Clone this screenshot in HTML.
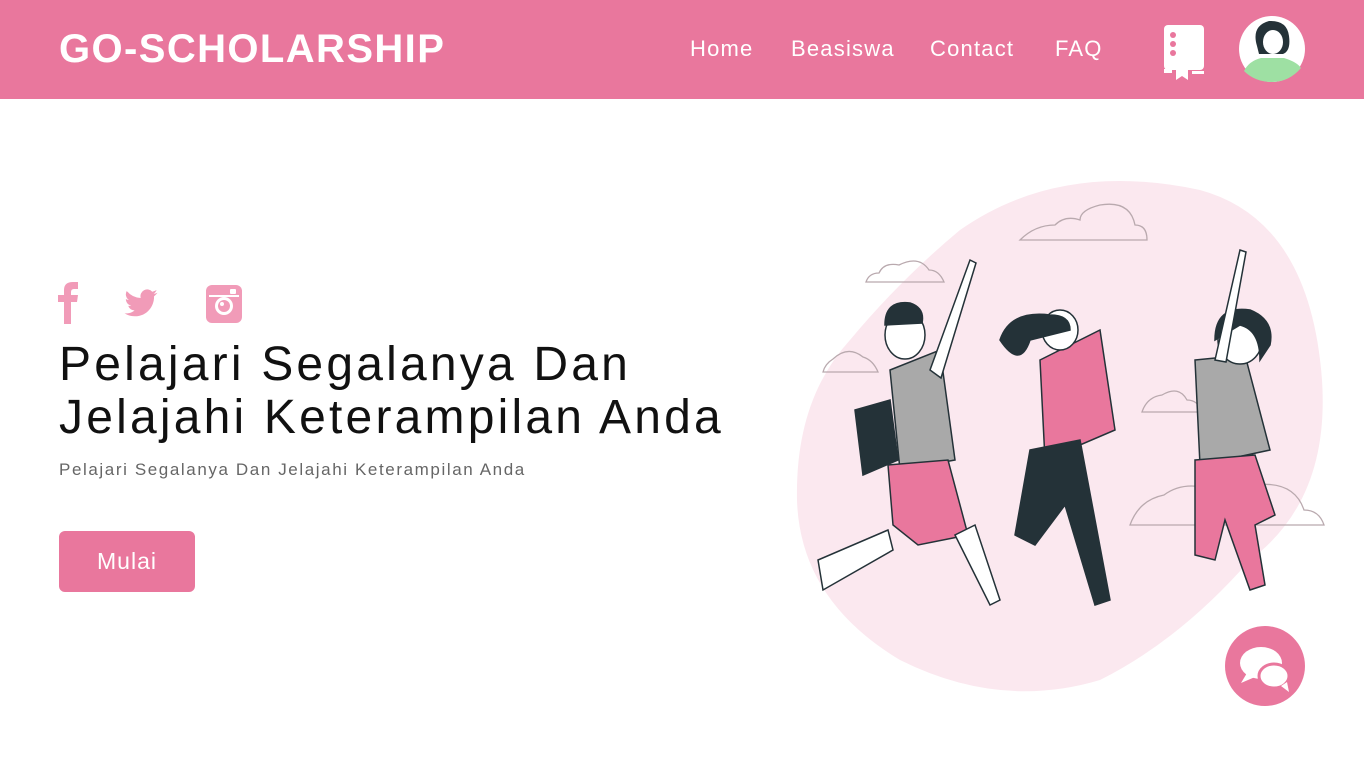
<!DOCTYPE html>
<html><head><meta charset="utf-8"><style>
*{margin:0;padding:0;box-sizing:border-box}
body{width:1364px;height:762px;background:#fff;font-family:"Liberation Sans",sans-serif;position:relative;overflow:hidden}
header{position:absolute;left:0;top:0;width:1364px;height:99px;background:#e9779d}
.logo{position:absolute;left:59px;top:27px;color:#fff;font-weight:bold;font-size:40px;letter-spacing:1.4px}
nav a{position:absolute;top:36px;color:#fff;font-size:22px;text-decoration:none;letter-spacing:1.2px}
h1{position:absolute;left:59px;top:338px;font-weight:normal;font-size:48px;line-height:53px;color:#111;letter-spacing:3.2px}
.sub{position:absolute;left:59px;top:460px;font-size:17px;color:#666;letter-spacing:1.6px}
.btn{position:absolute;left:59px;top:531px;width:136px;height:61px;background:#e9779d;border-radius:6px;color:#fff;font-size:23px;text-align:center;line-height:61px;letter-spacing:1px}
.chat{position:absolute;left:1225px;top:626px;width:80px;height:80px;border-radius:50%;background:#e9779d}
</style></head><body>
<header>
<div class="logo">GO-SCHOLARSHIP</div>
<nav><a style="left:690px">Home</a><a style="left:791px">Beasiswa</a><a style="left:930px">Contact</a><a style="left:1055px">FAQ</a></nav>
<svg style="position:absolute;left:1164px;top:25px" width="42" height="55" viewBox="0 0 42 55">
<rect x="0" y="0" width="40" height="45" rx="4" fill="#fff"/><circle cx="9" cy="10" r="3" fill="#e9779d"/><circle cx="9" cy="19" r="3" fill="#e9779d"/><circle cx="9" cy="28" r="3" fill="#e9779d"/>
<rect x="0" y="44" width="8" height="4" fill="#fff"/><rect x="28" y="46" width="12" height="3" fill="#fff"/>
<path d="M12 44h12v11l-6-4-6 4z" fill="#fff"/></svg>
<svg style="position:absolute;left:1239px;top:16px" width="66" height="66" viewBox="0 0 66 66">
<circle cx="33" cy="33" r="33" fill="#fff"/>
<path d="M5 55 Q10 45 22 42 L45 42 Q58 46 62 52 Q50 66 33 66 Q16 66 5 55z" fill="#9ee0a3"/>
<path d="M18 30 Q12 10 30 5 Q48 4 50 20 Q52 35 44 38 L20 38z" fill="#243238"/>
<ellipse cx="34" cy="26" rx="10" ry="12" fill="#fff"/>
</svg>
</header>
<svg style="position:absolute;left:58px;top:282px" width="20" height="42" viewBox="0 0 20 42"><path d="M6 42V20H0v-7h6V8q0-8 9-8h5v7h-4q-3 0-3 3v3h7l-1 7h-6v22z" fill="#f19bb8"/></svg>
<svg style="position:absolute;left:122px;top:286px" width="38" height="36" viewBox="0 0 24 24"><path d="M23 4.5c-.8.4-1.7.6-2.6.7.9-.6 1.6-1.4 2-2.5-.9.5-1.9.9-2.9 1.1A4.5 4.5 0 0 0 11.8 8 12.8 12.8 0 0 1 2.5 3.3a4.5 4.5 0 0 0 1.4 6c-.7 0-1.4-.2-2-.6 0 2.2 1.5 4 3.6 4.4-.7.2-1.4.2-2 .1.6 1.800 2.2 3.1 4.2 3.1A9 9 0 0 1 1 18.2 12.8 12.8 0 0 0 7.9 20.2c8.3 0 12.8-6.9 12.8-12.8v-.6c.9-.6 1.6-1.4 2.3-2.3z" fill="#f19bb8"/></svg>
<svg style="position:absolute;left:206px;top:285px" width="36" height="38" viewBox="0 0 36 38"><rect width="36" height="38" rx="6" fill="#f19bb8"/><rect x="3" y="10" width="30" height="2" fill="#fff"/><circle cx="18" cy="21" r="9" fill="#fff"/><circle cx="18" cy="21" r="6" fill="#f19bb8"/><circle cx="16" cy="19" r="2" fill="#fff"/><rect x="24" y="4" width="6" height="5" rx="1" fill="#fff"/></svg>
<h1>Pelajari Segalanya Dan<br>Jelajahi Keterampilan Anda</h1>
<div class="sub">Pelajari Segalanya Dan Jelajahi Keterampilan Anda</div>
<div class="btn">Mulai</div>
<svg style="position:absolute;left:790px;top:170px" width="550" height="530" viewBox="790 170 550 530">
<path d="M960 230 Q1060 160 1200 190 Q1310 220 1322 380 Q1330 500 1250 560 Q1180 640 1100 680 Q1000 710 900 660 Q800 600 797 500 Q795 400 850 340 Q900 280 960 230z" fill="#fbe8ef"/>
<g fill="none" stroke="#b9a9ae" stroke-width="1.3">
<path d="M1020 240h127q0-15-12-15q-5-25-35-20q-20 5-20 15q-15-5-25 5q-20 0-35 15z"/>
<path d="M866 282h78q-5-12-15-12q-10-15-30-5q-15-3-20 8q-10 0-13 9z"/>
<path d="M823 372h55q-5-12-15-15q-15-12-30 2q-8 5-10 13z"/>
<path d="M1142 412h60q-4-12-15-12q-8-15-25-5q-15 2-20 17z"/>
<path d="M1130 525h194q-5-15-20-15q-10-30-50-25q-20-10-40 5q-30-10-50 5q-25 5-34 30z"/>
</g>
<g stroke="#243238" stroke-width="1.5">
<path d="M890 370l50-20 15 110-55 10z" fill="#a9a9a9"/>
<path d="M888 465l60-5 20 75-50 10-25-20z" fill="#e9779d"/>
<path d="M888 530l-70 30 5 30 70-40z" fill="#fff"/>
<path d="M955 535l35 70 10-5-25-75z" fill="#fff"/>
<ellipse cx="905" cy="335" rx="20" ry="24" fill="#fff"/>
<path d="M885 325q0-25 25-22q15 5 12 20z" fill="#243238"/>
<path d="M855 410l35-10 8 60-35 15z" fill="#243238"/>
<path d="M1040 360l60-30 15 100-70 30z" fill="#e9779d"/>
<path d="M1030 450l50-10 30 160-15 5-30-100-30 40-20-10z" fill="#243238"/>
<ellipse cx="1060" cy="330" rx="18" ry="20" fill="#fff"/>
<path d="M1000 340q10-30 50-25q20 0 20 15l-40 10q-10 30-30 0z" fill="#243238"/>
<path d="M1195 360l50-5 25 95-70 15z" fill="#a9a9a9"/>
<path d="M1195 460l60-5 20 60-20 10 10 60-15 5-25-70-10 40-20-5z" fill="#e9779d"/>
<ellipse cx="1240" cy="340" rx="22" ry="24" fill="#fff"/>
<path d="M1215 340q0-35 35-30q25 10 20 35l-10 15q0-30-20-35z" fill="#243238"/>
<path d="M1215 360l25-110 6 2-20 110z" fill="#fff"/>
<path d="M930 370l40-110 6 3-35 115z" fill="#fff"/>
</g>
</svg>
<div class="chat"><svg width="80" height="80" viewBox="0 0 80 80"><ellipse cx="36" cy="37" rx="21" ry="16" fill="#fff"/><path d="M22 47l-6 10 14-6z" fill="#fff"/><ellipse cx="49" cy="50" rx="15" ry="12" fill="#fff" stroke="#e9779d" stroke-width="3"/><path d="M56 60l8 6-2-10z" fill="#fff"/></svg></div>
</body></html>
